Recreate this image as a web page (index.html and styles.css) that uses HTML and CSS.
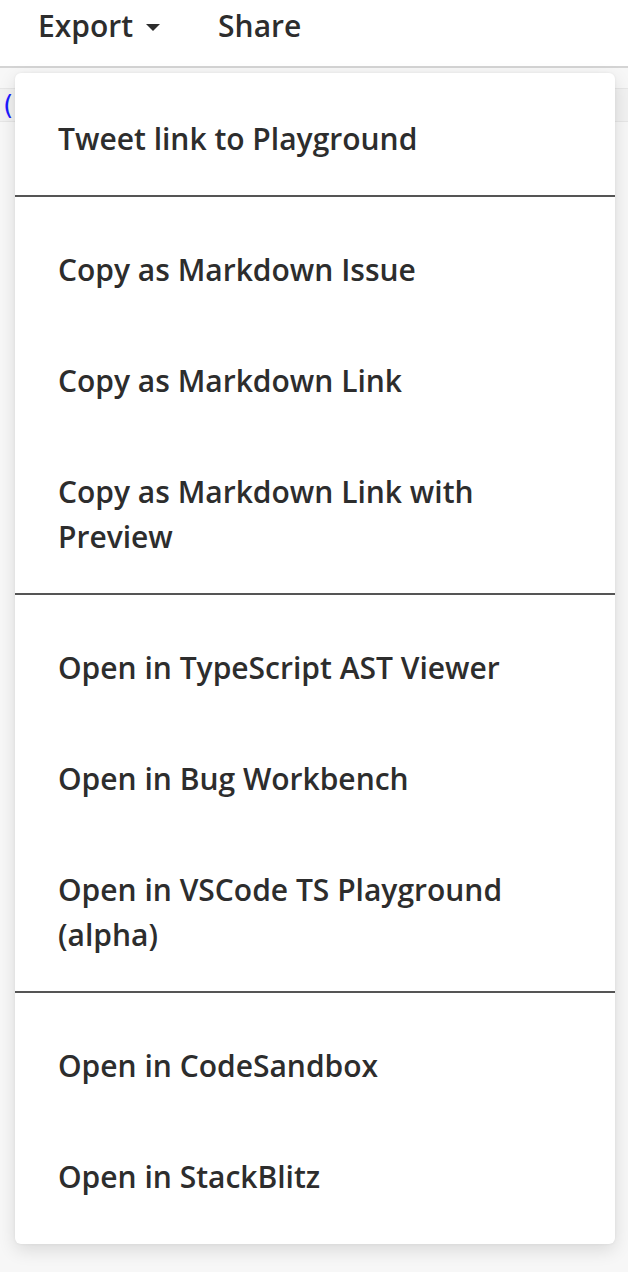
FILE: index.html
```html
<!DOCTYPE html>
<html>
<head>
<meta charset="utf-8">
<link rel="stylesheet" href="styles.css">
</head>
<body>
<div class="page">
  <header class="topbar">
    <nav class="nav">
      <span class="nav-item">Export <span class="caret"></span></span>
      <span class="nav-item">Share</span>
    </nav>
  </header>
  <div class="workspace">
    <div class="editor-strip"><span class="paren">(</span></div>
  </div>
  <ul class="menu">
    <li class="item">Tweet link to Playground</li>
    <li class="sep"></li>
    <li class="item">Copy as Markdown Issue</li>
    <li class="item">Copy as Markdown Link</li>
    <li class="item">Copy as Markdown Link with Preview</li>
    <li class="sep"></li>
    <li class="item">Open in TypeScript AST Viewer</li>
    <li class="item">Open in Bug Workbench</li>
    <li class="item">Open in VSCode TS Playground (alpha)</li>
    <li class="sep"></li>
    <li class="item">Open in CodeSandbox</li>
    <li class="item">Open in StackBlitz</li>
  </ul>
</div>
</body>
</html>
```

FILE: styles.css
```css
* { box-sizing: border-box; }
html, body { margin: 0; padding: 0; }
body {
  width: 628px;
  height: 1272px;
  overflow: hidden;
  font-family: "Open Sans", "Noto Sans", sans-serif;
  color: #2d2d2d;
  background: #f7f7f7;
}
.page { position: relative; width: 628px; height: 1272px; }
.topbar {
  height: 68px;
  background: #fff;
  border-bottom: 2px solid #d4d4d4;
}
.nav {
  display: flex;
  gap: 58px;
  padding-left: 38px;
  height: 100%;
  align-items: flex-start;
}
.nav-item {
  font-size: 30px;
  font-weight: 600;
  line-height: 52px;
  display: flex;
  align-items: center;
  gap: 13px;
  color: #2d2d2d;
}
.caret {
  width: 0; height: 0;
  border-left: 7px solid transparent;
  border-right: 7px solid transparent;
  border-top: 7px solid #2d2d2d;
  margin-top: 2px;
}
.workspace { height: 1202px; }
.editor-strip {
  margin-top: 20px;
  height: 34px;
  background: #f1f1f1;
  border-top: 1px solid #e6e6e6;
  border-bottom: 1px solid #e6e6e6;
  display: flex;
  align-items: center;
}
.paren {
  color: #1a1aff;
  font-family: "DejaVu Sans Mono", monospace;
  font-size: 26px;
  margin-left: 0;
}
.menu {
  position: absolute;
  left: 15px;
  top: 73px;
  width: 600px;
  margin: 0;
  padding: 10px 0 12px;
  list-style: none;
  background: #fff;
  border-radius: 6px;
  box-shadow: 0 6px 18px rgba(0,0,0,0.12), 0 0 3px rgba(0,0,0,0.06);
}
.item {
  font-size: 30px;
  font-weight: 600;
  line-height: 45px;
  padding: 33px 40px 33px 43px;
  color: #2d2d2d;
}
.sep {
  height: 2px;
  background: #555;
  margin: 1px 0 17px;
}
```
